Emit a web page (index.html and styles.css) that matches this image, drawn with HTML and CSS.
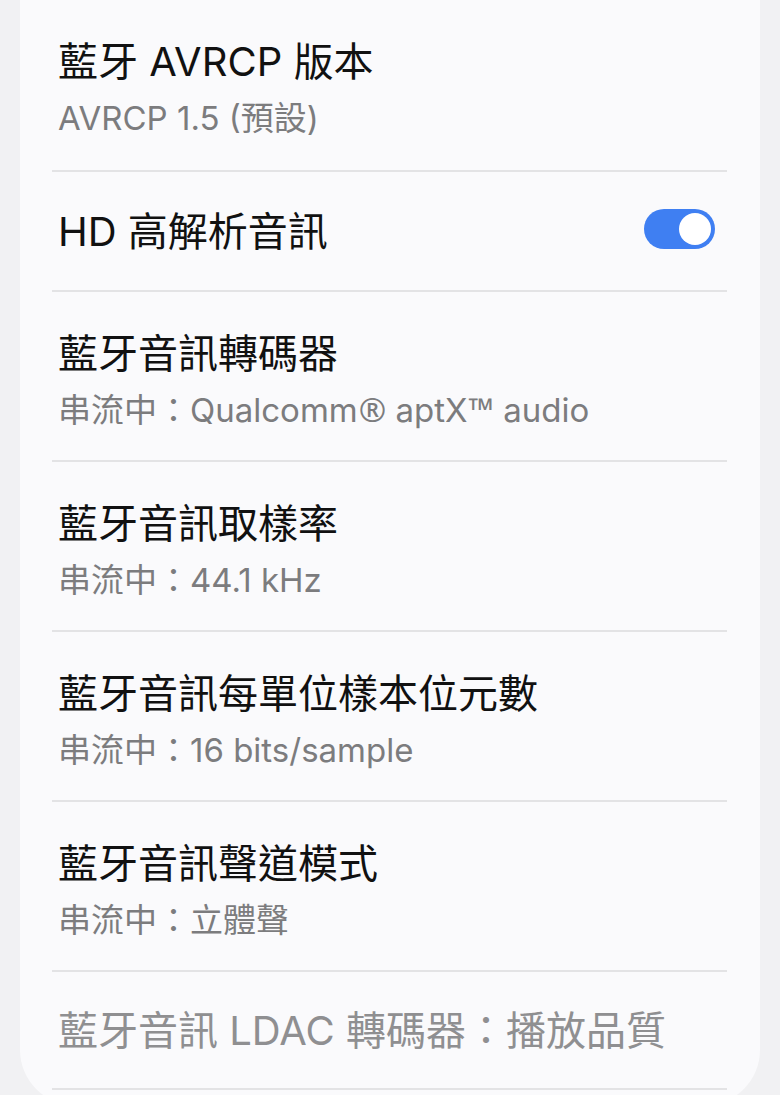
FILE: index.html
```html
<!DOCTYPE html>
<html lang="zh-TW">

<head>
    <meta charset="UTF-8">
    <meta name="viewport" content="width=device-width, initial-scale=1.0">
    <title>藍牙音訊設定</title>
    <link rel="stylesheet" href="styles.css">
</head>

<body>
    <section class="settings-card">
        <div class="setting-row">
            <div class="setting-title">藍牙 AVRCP 版本</div>
            <div class="setting-sub">AVRCP 1.5 (預設)</div>
        </div>
        <div class="setting-row setting-row--single setting-row--switch">
            <div class="setting-title">HD 高解析音訊</div>
            <span class="switch switch--on"><span class="switch-knob"></span></span>
        </div>
        <div class="setting-row">
            <div class="setting-title">藍牙音訊轉碼器</div>
            <div class="setting-sub">串流中：Qualcomm<span class="mark">®</span> aptX<span class="mark">™</span> audio</div>
        </div>
        <div class="setting-row">
            <div class="setting-title">藍牙音訊取樣率</div>
            <div class="setting-sub">串流中：44.1 kHz</div>
        </div>
        <div class="setting-row">
            <div class="setting-title">藍牙音訊每單位樣本位元數</div>
            <div class="setting-sub">串流中：16 bits/sample</div>
        </div>
        <div class="setting-row">
            <div class="setting-title">藍牙音訊聲道模式</div>
            <div class="setting-sub">串流中：立體聲</div>
        </div>
        <div class="setting-row setting-row--single setting-row--disabled">
            <div class="setting-title">藍牙音訊 LDAC 轉碼器：播放品質</div>
        </div>
    </section>
</body>

</html>
```

FILE: styles.css
```css
/* 全局样式 */
body {
    margin: 0;
    padding: 0 20px;
    background-color: #f1f1f3;
    font-family: Inter, "Noto Sans CJK TC", sans-serif;
    color: #111;
}

/* 设置卡片 */
.settings-card {
    background-color: #fafafc;
    border-radius: 0 0 55px 55px;
    padding: 0 33px 15px 32px;
}

/* 设置行 */
.setting-row {
    padding: 36px 6px 28px;
    border-top: 2px solid #e3e3e5;
}

.setting-row:first-child {
    border-top: none;
    padding-bottom: 30px;
}

.setting-row:last-child {
    border-bottom: 2px solid #e3e3e5;
}

.setting-row--single {
    padding-top: 34px;
    padding-bottom: 32px;
}

.setting-row--disabled {
    padding-top: 33px;
    padding-bottom: 31px;
}

.setting-row--switch {
    display: flex;
    align-items: center;
    justify-content: space-between;
    padding-right: 12px;
}

.setting-title {
    font-size: 40px;
    line-height: 52px;
}

.setting-sub {
    font-size: 33px;
    line-height: 44px;
    margin-top: 8px;
    color: #7c7c7e;
}

/* 商标符号用全尺寸字形 */
.mark {
    font-family: "Noto Sans", sans-serif;
    margin-left: 1px;
}

.setting-row--disabled .setting-title {
    color: #8f8f91;
}

/* 开关 */
.switch {
    width: 71px;
    height: 40px;
    margin-bottom: 6px;
    border-radius: 20px;
    background-color: #3f7ff2;
    display: flex;
    align-items: center;
    justify-content: flex-end;
    padding: 0 4px;
    box-sizing: border-box;
}

.switch-knob {
    width: 32px;
    height: 32px;
    border-radius: 50%;
    background-color: #fff;
}
```
